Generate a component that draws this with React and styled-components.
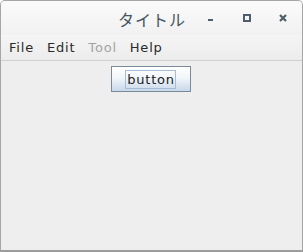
import React from "react";
import styled, { createGlobalStyle } from "styled-components";

const Global = createGlobalStyle`
  html, body { margin: 0; padding: 0; background: #ffffff; }
  body { font-family: "DejaVu Sans", "Noto Sans CJK JP", sans-serif; }
`;

const Frame = styled.div`
  width: 303px;
  height: 252px;
  box-sizing: border-box;
  display: flex;
  flex-direction: column;
  border: 1px solid #a6a6a6;
  border-bottom: 2px solid #9c9c9c;
  border-radius: 5px 5px 0 0;
  background: #eeeeee;
  overflow: hidden;
`;

const TitleBar = styled.div`
  height: 34px;
  flex: none;
  display: flex;
  align-items: center;
  position: relative;
  background: linear-gradient(#fbfbfb, #f1f1f1);
`;

const Title = styled.div`
  position: absolute;
  left: 0;
  right: 0;
  text-align: center;
  font-family: "Noto Sans CJK JP", sans-serif;
  font-size: 16px;
  letter-spacing: 1px;
  font-weight: 400;
  color: #46555f;
  top: 6px;
  padding-left: 1px;
`;

const Controls = styled.div`
  margin-left: auto;
  margin-right: 1px;
  display: flex;
  align-items: center;
  position: relative;
`;

const Ctrl = styled.div`
  width: 36px;
  height: 20px;
  display: flex;
  align-items: center;
  justify-content: center;
`;

const MenuBar = styled.div`
  height: 25px;
  flex: none;
  display: flex;
  align-items: center;
  gap: 13px;
  padding-left: 8px;
  background: linear-gradient(#f5f5f5, #ececec);
  border-bottom: 1px solid #cfcfcf;
`;

const MenuItem = styled.div`
  font-size: 13px;
  letter-spacing: 0.8px;
  color: ${(p) => (p.$disabled ? "#a3a3a3" : "#2a2a2a")};
`;

const Content = styled.div`
  flex: 1;
  display: flex;
  justify-content: center;
  align-items: flex-start;
  padding-top: 5px;
  padding-right: 2px;
  background: #eeeeee;
`;

const Button = styled.div`
  width: 80px;
  height: 26px;
  box-sizing: border-box;
  border: 1px solid #7a8a99;
  background: linear-gradient(#ffffff 0%, #f2f6fa 45%, #c8d8ea 100%);
  display: flex;
  align-items: center;
  justify-content: center;
`;

const Focus = styled.span`
  font-size: 13px;
  letter-spacing: 0.8px;
  color: #222;
  padding: 0 0 0 1px;
  line-height: 17px;
  border: 1px solid #a7bdd3;
`;

export default function App() {
  return (
    <>
      <Global />
      <Frame>
        <TitleBar>
          <Title>タイトル</Title>
          <Controls>
            <Ctrl>
              <svg width="6" height="8"><rect x="0" y="5" width="5" height="2" fill="#4e5e6a" /></svg>
            </Ctrl>
            <Ctrl>
              <svg width="8" height="8"><rect x="1" y="1" width="6" height="6" fill="none" stroke="#4e5e6a" strokeWidth="2" /></svg>
            </Ctrl>
            <Ctrl>
              <svg width="8" height="8"><path d="M1 1L7 7M7 1L1 7" stroke="#4e5e6a" strokeWidth="2.2" /></svg>
            </Ctrl>
          </Controls>
        </TitleBar>
        <MenuBar>
          <MenuItem>File</MenuItem>
          <MenuItem>Edit</MenuItem>
          <MenuItem $disabled>Tool</MenuItem>
          <MenuItem>Help</MenuItem>
        </MenuBar>
        <Content>
          <Button>
            <Focus>button</Focus>
          </Button>
        </Content>
      </Frame>
    </>
  );
}
